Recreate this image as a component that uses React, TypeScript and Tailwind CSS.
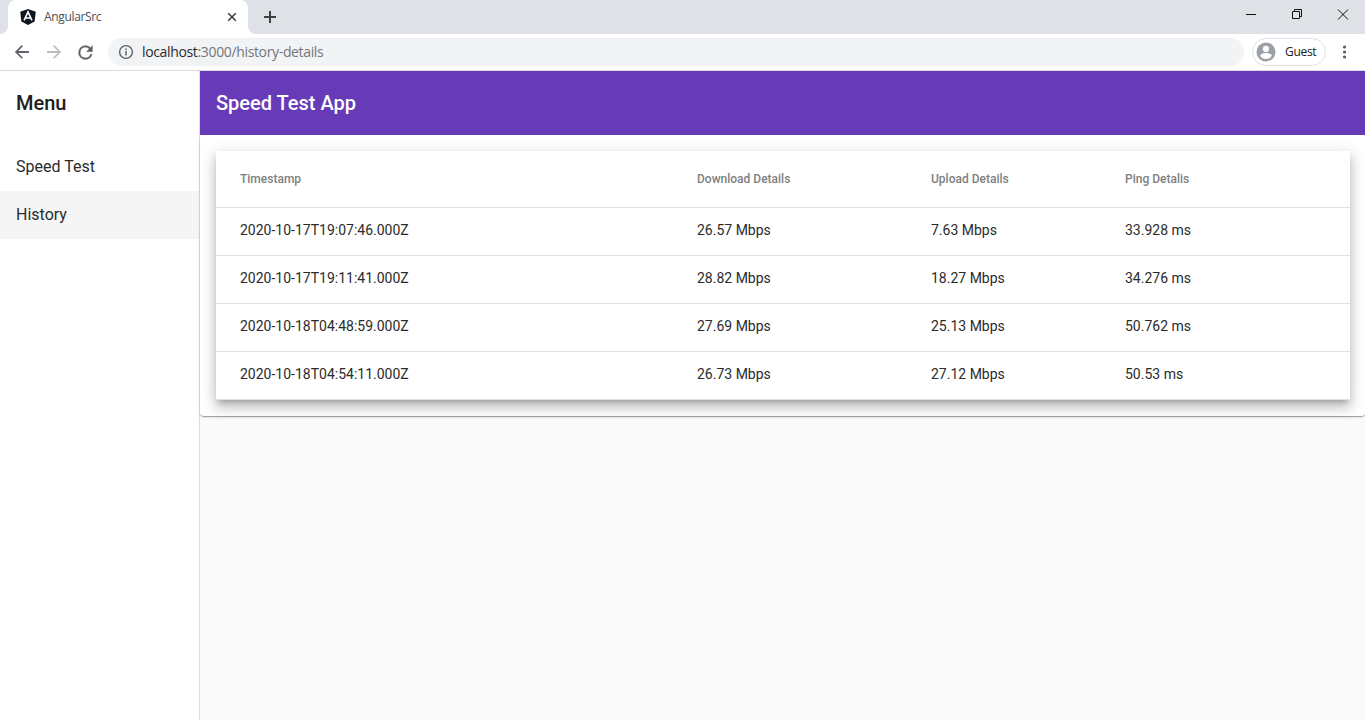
import React from "react";

const rows = [
  ["2020-10-17T19:07:46.000Z", "26.57 Mbps", "7.63 Mbps", "33.928 ms"],
  ["2020-10-17T19:11:41.000Z", "28.82 Mbps", "18.27 Mbps", "34.276 ms"],
  ["2020-10-18T04:48:59.000Z", "27.69 Mbps", "25.13 Mbps", "50.762 ms"],
  ["2020-10-18T04:54:11.000Z", "26.73 Mbps", "27.12 Mbps", "50.53 ms"],
];

function TabStrip() {
  return (
    <div className="flex h-[34px] bg-[#dee1e6]">
      <div className="h-full w-2 bg-white">
        <div className="h-full w-full rounded-br-lg bg-[#dee1e6]" />
      </div>
      <div className="flex h-full w-[240px] items-center rounded-t-lg bg-white pl-3">
        <svg width="16" height="16" viewBox="0 0 16 16" className="shrink-0">
          <path d="M8 0 15.8 2.7 14.6 12.6 8 16 1.4 12.6.2 2.7Z" fill="#10161f" />
          <path d="M4.1 11.4 8 2.9l3.9 8.5M5.9 9h4.2" stroke="#fff" strokeWidth="1.6" fill="none" />
        </svg>
        <span className="ml-2 w-[183px] font-['Open_Sans',sans-serif] text-[12px] leading-4 tracking-[-0.34px] text-[#4d5054]">AngularSrc</span>
        <svg width="10" height="10" viewBox="0 0 10 10">
          <path d="M1.2 1.2 8.8 8.8M8.8 1.2 1.2 8.8" stroke="#3c4043" strokeWidth="1.6" />
        </svg>
      </div>
      <div className="h-full w-2 bg-white">
        <div className="h-full w-full rounded-bl-lg bg-[#dee1e6]" />
      </div>
      <svg width="12" height="12" viewBox="0 0 12 12" className="mt-[11px] ml-2">
        <path d="M6 0v12M0 6h12" stroke="#3c4043" strokeWidth="2" />
      </svg>
      <svg width="104" height="12" viewBox="0 0 104 12" className="mt-[8px] ml-auto mr-[15px]" fill="none" stroke="#111">
        <path d="M0 6.5h10" />
        <path d="M46.500 3.500h7v7h-7zM48.500 3.500v-2h7v7h-2" />
        <path d="M92 1.500l10 10M102 1.500l-10 10" />
      </svg>
    </div>
  );
}

function Toolbar() {
  return (
    <div className="flex h-[37px] items-center border-b border-[#d9dbdf] bg-white pl-3">
      <svg width="20" height="20" viewBox="0 0 24 24" fill="#5f6368">
        <path d="M20.300 10.800H7.500l5.600-5.600L11.700 3.700 3.500 12l8.200 8.200 1.400-1.400-5.600-5.700h12.800z" />
      </svg>
      <svg width="20" height="20" viewBox="0 0 24 24" fill="#babcbe" className="ml-3">
        <path d="M3.700 10.800h12.800l-5.600-5.600 1.400-1.500 8.200 8.300-8.200 8.200-1.400-1.400 5.600-5.700H3.700z" />
      </svg>
      <svg width="21" height="21" viewBox="0 0 24 24" fill="#5f6368" stroke="#5f6368" strokeWidth="0.300" className="ml-[11px]">
        <path d="M17.650 6.350A7.958 7.958 0 0 0 12 4a8 8 0 1 0 7.730 10h-2.080A6 6 0 1 1 12 6c1.660 0 3.140.69 4.220 1.780L13 11h7V4z" />
      </svg>
      <div className="ml-3 flex h-7 w-[1136px] items-center rounded-full bg-[#f1f3f4] pl-[10px]">
        <svg width="16" height="16" viewBox="0 0 16 16" fill="none">
          <circle cx="8" cy="8" r="6.400" stroke="#5f6368" strokeWidth="1.400" />
          <path d="M8 7v4.500M8 4.400v1.500" stroke="#5f6368" strokeWidth="1.500" />
        </svg>
        <span className="ml-2 font-['Open_Sans',sans-serif] text-[14px] leading-5 tracking-[-0.35px] text-[#73777c]"><span className="text-[#2a2b2e]">localhost</span>:3000/history-details</span>
      </div>
      <div className="ml-2 flex h-7 w-[74px] items-center rounded-full border border-[#dfe1e5] pl-[3px]">
        <svg width="20" height="20" viewBox="0 0 20 20">
          <circle cx="10" cy="10" r="9.500" fill="#9aa0a6" />
          <circle cx="10" cy="6.900" r="3.100" fill="#fff" />
          <path d="M4.200 13.800c.2-2.100 3.700-2.900 5.800-2.900s5.600.8 5.800 2.900A7 7 0 0 1 10 17a7 7 0 0 1-5.800-3.200z" fill="#fff" />
        </svg>
        <span className="ml-[9px] font-['Open_Sans',sans-serif] text-[12px] leading-4 tracking-[-0.3px] text-[#202124]">Guest</span>
      </div>
      <svg width="4" height="14" viewBox="0 0 4 14" fill="#5f6368" className="ml-4">
        <circle cx="2.500" cy="2" r="1.600" />
        <circle cx="2.500" cy="7" r="1.600" />
        <circle cx="2.500" cy="12" r="1.600" />
      </svg>
    </div>
  );
}

function HistoryTable() {
  return (
    <div className="w-[1134px] bg-white shadow-[0_5px_5px_-3px_rgba(0,0,0,0.2),0_8px_10px_1px_rgba(0,0,0,0.14),0_3px_14px_2px_rgba(0,0,0,0.12)]">
      <div className="grid h-[57px] grid-cols-[457px_234px_194px_1fr] items-center border-b border-[#e0e0e0] pl-6 text-[12px] font-medium text-[#808080]">
        <span>Timestamp</span>
        <span>Download Details</span>
        <span>Upload Details</span>
        <span>Ping Detalis</span>
      </div>
      {rows.map((row) => (
        <div key={row[0]} className="grid h-12 grid-cols-[457px_234px_194px_1fr] items-center border-b border-[#e0e0e0] pb-[2px] pl-6 text-[14px] text-[#2b2b2b]">
          {row.map((cell) => (
            <span key={cell}>{cell}</span>
          ))}
        </div>
      ))}
    </div>
  );
}

export default function App() {
  return (
    <div className="flex h-[720px] w-[1365px] flex-col overflow-hidden bg-[#fafafa] font-['Roboto',sans-serif]">
      <TabStrip />
      <Toolbar />
      <div className="flex min-h-0 flex-1">
        <nav className="w-[200px] shrink-0 border-r border-[#dedede] bg-white text-[#212121]">
          <div className="flex h-16 items-center px-4 text-[20px] font-medium">Menu</div>
          <div className="mt-2 flex h-12 items-center px-4 text-[16px] text-[#2b2b2b]">Speed Test</div>
          <div className="flex h-12 items-center bg-[#f5f5f5] px-4 text-[16px] text-[#2b2b2b]">History</div>
        </nav>
        <main className="min-w-0 flex-1">
          <header className="flex h-16 items-center bg-[#673ab7] px-4 text-[20px] font-medium text-white">Speed Test App</header>
          <section className="rounded bg-white p-4 shadow-[0_2px_1px_-1px_rgba(0,0,0,0.2),0_1px_1px_0_rgba(0,0,0,0.14),0_1px_3px_0_rgba(0,0,0,0.12)]">
            <HistoryTable />
          </section>
        </main>
      </div>
    </div>
  );
}
